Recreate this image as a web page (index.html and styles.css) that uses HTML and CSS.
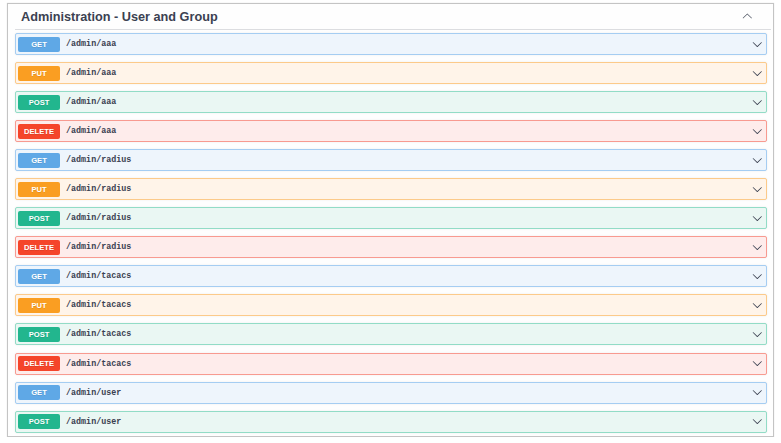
FILE: index.html
```html
<!DOCTYPE html>
<html lang="en">
<head>
  <meta charset="UTF-8">
  <meta name="viewport" content="width=device-width, initial-scale=1.0">
  <title>Administration - User and Group</title>
  <link rel="stylesheet" href="styles.css">
</head>
<body>
  <div class="frame">
    <div class="tag-header">
      <h3 class="tag-title">Administration - User and Group</h3>
      <svg class="arrow arrow-up" viewBox="0 0 20 20"><path d="M17.418 6.109c.272-.268.709-.268.979 0s.271.701 0 .969l-7.908 7.83c-.27.268-.707.268-.979 0l-7.908-7.830c-.27-.268-.27-.701 0-.969.271-.268.709-.268.979 0L10 13.25l7.418-7.141z"/></svg>
    </div>

    <div class="opblock get"><span class="method">GET</span><span class="path">/admin/aaa</span><svg class="arrow" viewBox="0 0 20 20"><path d="M17.418 6.109c.272-.268.709-.268.979 0s.271.701 0 .969l-7.908 7.83c-.27.268-.707.268-.979 0l-7.908-7.83c-.27-.268-.27-.701 0-.969.271-.268.709-.268.979 0L10 13.25l7.418-7.141z"/></svg></div>
    <div class="opblock put"><span class="method">PUT</span><span class="path">/admin/aaa</span><svg class="arrow" viewBox="0 0 20 20"><path d="M17.418 6.109c.272-.268.709-.268.979 0s.271.701 0 .969l-7.908 7.83c-.27.268-.707.268-.979 0l-7.908-7.83c-.27-.268-.27-.701 0-.969.271-.268.709-.268.979 0L10 13.25l7.418-7.141z"/></svg></div>
    <div class="opblock post"><span class="method">POST</span><span class="path">/admin/aaa</span><svg class="arrow" viewBox="0 0 20 20"><path d="M17.418 6.109c.272-.268.709-.268.979 0s.271.701 0 .969l-7.908 7.83c-.27.268-.707.268-.979 0l-7.908-7.83c-.27-.268-.27-.701 0-.969.271-.268.709-.268.979 0L10 13.25l7.418-7.141z"/></svg></div>
    <div class="opblock delete"><span class="method">DELETE</span><span class="path">/admin/aaa</span><svg class="arrow" viewBox="0 0 20 20"><path d="M17.418 6.109c.272-.268.709-.268.979 0s.271.701 0 .969l-7.908 7.83c-.27.268-.707.268-.979 0l-7.908-7.83c-.27-.268-.27-.701 0-.969.271-.268.709-.268.979 0L10 13.25l7.418-7.141z"/></svg></div>

    <div class="opblock get"><span class="method">GET</span><span class="path">/admin/radius</span><svg class="arrow" viewBox="0 0 20 20"><path d="M17.418 6.109c.272-.268.709-.268.979 0s.271.701 0 .969l-7.908 7.83c-.27.268-.707.268-.979 0l-7.908-7.83c-.27-.268-.27-.701 0-.969.271-.268.709-.268.979 0L10 13.25l7.418-7.141z"/></svg></div>
    <div class="opblock put"><span class="method">PUT</span><span class="path">/admin/radius</span><svg class="arrow" viewBox="0 0 20 20"><path d="M17.418 6.109c.272-.268.709-.268.979 0s.271.701 0 .969l-7.908 7.83c-.27.268-.707.268-.979 0l-7.908-7.83c-.27-.268-.27-.701 0-.969.271-.268.709-.268.979 0L10 13.25l7.418-7.141z"/></svg></div>
    <div class="opblock post"><span class="method">POST</span><span class="path">/admin/radius</span><svg class="arrow" viewBox="0 0 20 20"><path d="M17.418 6.109c.272-.268.709-.268.979 0s.271.701 0 .969l-7.908 7.83c-.27.268-.707.268-.979 0l-7.908-7.83c-.27-.268-.27-.701 0-.969.271-.268.709-.268.979 0L10 13.25l7.418-7.141z"/></svg></div>
    <div class="opblock delete"><span class="method">DELETE</span><span class="path">/admin/radius</span><svg class="arrow" viewBox="0 0 20 20"><path d="M17.418 6.109c.272-.268.709-.268.979 0s.271.701 0 .969l-7.908 7.83c-.27.268-.707.268-.979 0l-7.908-7.83c-.27-.268-.27-.701 0-.969.271-.268.709-.268.979 0L10 13.25l7.418-7.141z"/></svg></div>

    <div class="opblock get"><span class="method">GET</span><span class="path">/admin/tacacs</span><svg class="arrow" viewBox="0 0 20 20"><path d="M17.418 6.109c.272-.268.709-.268.979 0s.271.701 0 .969l-7.908 7.83c-.27.268-.707.268-.979 0l-7.908-7.83c-.27-.268-.27-.701 0-.969.271-.268.709-.268.979 0L10 13.25l7.418-7.141z"/></svg></div>
    <div class="opblock put"><span class="method">PUT</span><span class="path">/admin/tacacs</span><svg class="arrow" viewBox="0 0 20 20"><path d="M17.418 6.109c.272-.268.709-.268.979 0s.271.701 0 .969l-7.908 7.83c-.27.268-.707.268-.979 0l-7.908-7.83c-.27-.268-.27-.701 0-.969.271-.268.709-.268.979 0L10 13.25l7.418-7.141z"/></svg></div>
    <div class="opblock post"><span class="method">POST</span><span class="path">/admin/tacacs</span><svg class="arrow" viewBox="0 0 20 20"><path d="M17.418 6.109c.272-.268.709-.268.979 0s.271.701 0 .969l-7.908 7.83c-.27.268-.707.268-.979 0l-7.908-7.83c-.27-.268-.27-.701 0-.969.271-.268.709-.268.979 0L10 13.25l7.418-7.141z"/></svg></div>
    <div class="opblock delete"><span class="method">DELETE</span><span class="path">/admin/tacacs</span><svg class="arrow" viewBox="0 0 20 20"><path d="M17.418 6.109c.272-.268.709-.268.979 0s.271.701 0 .969l-7.908 7.83c-.27.268-.707.268-.979 0l-7.908-7.83c-.27-.268-.27-.701 0-.969.271-.268.709-.268.979 0L10 13.25l7.418-7.141z"/></svg></div>

    <div class="opblock get"><span class="method">GET</span><span class="path">/admin/user</span><svg class="arrow" viewBox="0 0 20 20"><path d="M17.418 6.109c.272-.268.709-.268.979 0s.271.701 0 .969l-7.908 7.83c-.27.268-.707.268-.979 0l-7.908-7.83c-.27-.268-.27-.701 0-.969.271-.268.709-.268.979 0L10 13.25l7.418-7.141z"/></svg></div>
    <div class="opblock post"><span class="method">POST</span><span class="path">/admin/user</span><svg class="arrow" viewBox="0 0 20 20"><path d="M17.418 6.109c.272-.268.709-.268.979 0s.271.701 0 .969l-7.908 7.83c-.27.268-.707.268-.979 0l-7.908-7.83c-.27-.268-.27-.701 0-.969.271-.268.709-.268.979 0L10 13.25l7.418-7.141z"/></svg></div>
  </div>
</body>
</html>
```

FILE: styles.css
```css
body {
  margin: 0;
  background: #ffffff;
  font-family: "Liberation Sans", Arial, sans-serif;
  color: #3b4151;
}
.frame {
  box-sizing: border-box;
  width: 767px;
  margin: 3px 0 0 7px;
  padding: 0 6px 3px 7px;
  border: 1px solid #c4c4c4;
  box-shadow: 0 0 1px rgba(0, 0, 0, 0.15);
  background: #fefefe;
}
.tag-header {
  display: flex;
  align-items: center;
  justify-content: space-between;
  height: 25px;
  margin: 0 -4px 3px 0;
  padding: 0 18px 0 6px;
  border-bottom: 1px solid #dcdde0;
}
.tag-title {
  margin: 0;
  font-size: 12.7px;
  font-weight: bold;
  color: #3b4151;
}
.arrow {
  width: 10.6px;
  height: 10.6px;
  fill: #3b4151;
  flex-shrink: 0;
}
.arrow-up {
  transform: rotate(180deg);
  fill: #555b68;
}
.opblock {
  box-sizing: border-box;
  display: flex;
  align-items: center;
  height: 22px;
  margin-bottom: 7.05px;
  padding: 0 3px 0 2px;
  border: 1px solid;
  border-radius: 2px;
  box-shadow: 0 0 2px rgba(0, 0, 0, 0.08);
}
.opblock:last-child {
  margin-bottom: 0;
}
.method {
  width: 42px;
  height: 15px;
  line-height: 15px;
  border-radius: 2px;
  text-align: center;
  color: #ffffff;
  font-size: 7.6px;
  font-weight: bold;
  text-shadow: 0 1px 0 rgba(0, 0, 0, 0.1);
}
.path {
  flex: 1;
  padding-left: 6px;
  font-family: "Liberation Mono", "Courier New", monospace;
  font-size: 8.4px;
  font-weight: bold;
  color: #3b4151;
}
.get {
  background: #eef5fc;
  border-color: #a5cdf2;
}
.get .method {
  background: #5fa8e6;
}
.put {
  background: #fff4e9;
  border-color: #fcca8a;
}
.put .method {
  background: #fa9e22;
}
.post {
  background: #eaf7f3;
  border-color: #92dcc6;
}
.post .method {
  background: #22b68e;
}
.delete {
  background: #feeceb;
  border-color: #f89a90;
}
.delete .method {
  background: #f5452a;
}
```
